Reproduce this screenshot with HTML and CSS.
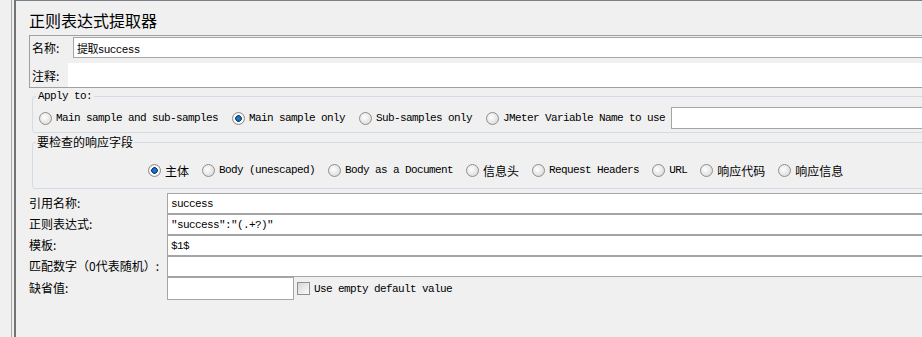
FILE: index.html
```html
<!DOCTYPE html>
<html lang="zh">
<head>
    <meta charset="UTF-8">
    <meta name="viewport" content="width=device-width, initial-scale=1.0">
    <title>正则表达式提取器</title>
    <link rel="stylesheet" href="styles.css">
</head>
<body>
<div class="tree-edge"></div>
<div class="splitter"></div>
<main class="panel">
    <h1 class="panel-title">正则表达式提取器</h1>

    <div class="name-box">
        <div class="name-row">
            <label class="name-label">名称:</label>
            <input class="text-field name-field mono" type="text" value="提取success">
        </div>
        <div class="comment-row">
            <label class="comment-label">注释:</label>
            <input class="comment-field" type="text">
        </div>
    </div>

    <fieldset class="group">
        <legend class="group-title mono">Apply to:</legend>
        <div class="option-row apply-row">
            <label class="option"><input class="radio" type="radio" name="scope"><span class="mono">Main sample and sub-samples</span></label>
            <label class="option"><input class="radio" type="radio" name="scope" checked><span class="mono">Main sample only</span></label>
            <label class="option"><input class="radio" type="radio" name="scope"><span class="mono">Sub-samples only</span></label>
            <label class="option"><input class="radio" type="radio" name="scope"><span class="mono">JMeter Variable Name to use</span></label>
            <input class="text-field var-field" type="text">
        </div>
    </fieldset>

    <fieldset class="group field-group">
        <legend class="group-title">要检查的响应字段</legend>
        <div class="option-row field-row">
            <label class="option"><input class="radio" type="radio" name="field" checked><span>主体</span></label>
            <label class="option"><input class="radio" type="radio" name="field"><span class="mono">Body (unescaped)</span></label>
            <label class="option"><input class="radio" type="radio" name="field"><span class="mono">Body as a Document</span></label>
            <label class="option"><input class="radio" type="radio" name="field"><span>信息头</span></label>
            <label class="option"><input class="radio" type="radio" name="field"><span class="mono">Request Headers</span></label>
            <label class="option"><input class="radio" type="radio" name="field"><span class="mono">URL</span></label>
            <label class="option"><input class="radio" type="radio" name="field"><span>响应代码</span></label>
            <label class="option"><input class="radio" type="radio" name="field"><span>响应信息</span></label>
        </div>
    </fieldset>

    <div class="form-grid">
        <label class="form-label">引用名称:</label>
        <input class="text-field stacked mono" type="text" value="success">
        <label class="form-label">正则表达式:</label>
        <input class="text-field stacked mono" type="text" value='"success":"(.+?)"'>
        <label class="form-label">模板:</label>
        <input class="text-field stacked mono" type="text" value="$1$">
        <label class="form-label">匹配数字（0代表随机）:</label>
        <input class="text-field stacked mono" type="text">
        <label class="form-label">缺省值:</label>
        <div class="default-row">
            <input class="text-field default-field mono" type="text">
            <label class="option check-option"><input class="checkbox" type="checkbox"><span class="mono">Use empty default value</span></label>
        </div>
    </div>
</main>
</body>
</html>
```

FILE: styles.css
```css
* {
    box-sizing: border-box;
}

body {
    margin: 0;
    height: 100vh;
    display: flex;
    overflow: hidden;
    background-color: #f0f0f0;
    color: #000000;
    font-family: "Noto Sans CJK SC", sans-serif;
    font-size: 12px;
}

.mono {
    font-family: "Liberation Mono", "Noto Sans CJK SC", monospace;
    font-size: 11px;
    letter-spacing: -0.6px;
}

.tree-edge {
    width: 11px;
    flex: none;
}

.splitter {
    width: 5px;
    flex: none;
    border-left: 1px solid #a8a8a8;
    border-right: 2px solid #737373;
}

.panel {
    flex: 1;
    min-width: 0;
    overflow: hidden;
    border-top: 1px solid #7b8088;
    padding-left: 13px;
}

.panel-title {
    margin: 9px 0 5px;
    font-size: 16px;
    line-height: 20px;
    font-weight: normal;
}

.text-field {
    margin: 0;
    padding: 0 3px;
    border: 1px solid #a5a5a5;
    background-color: #ffffff;
    color: #000000;
    outline: none;
}

.name-box {
    border: 1px solid #a0a0a0;
    margin-right: -4px;
    padding: 1px 0 0 1px;
}

.name-row,
.comment-row {
    display: flex;
    align-items: center;
}

.name-label {
    width: 42px;
    padding-left: 1px;
}

.name-field {
    flex: 1;
    min-width: 0;
    height: 21px;
}

.comment-row {
    margin-top: 5px;
}

.comment-label {
    width: 37px;
    padding-left: 1px;
}

.comment-field {
    flex: 1;
    min-width: 0;
    height: 24px;
    margin: 0;
    border: none;
    background-color: #ffffff;
    outline: none;
}

.group {
    margin: 2px -4px 0 3px;
    min-width: 0;
    border: 1px solid #d3dce6;
    border-radius: 3px;
    padding: 5px 0 3px 3px;
}

.group-title {
    padding: 0 2px;
    line-height: 12px;
}

.field-group .group-title {
    padding: 0 1px;
    line-height: 14px;
}

.field-group {
    padding: 11px 0 8px 3px;
}

.option-row {
    display: flex;
    align-items: center;
    gap: 14px;
}

.apply-row {
    height: 22px;
    margin-left: 3px;
}

.field-row {
    height: 20px;
    padding-left: 112px;
    gap: 13px;
}

.option {
    display: flex;
    align-items: center;
    white-space: nowrap;
}

.radio {
    appearance: none;
    flex: none;
    width: 13px;
    height: 13px;
    margin: 0 4px 0 0;
    border: 1px solid #8e8e8e;
    border-radius: 50%;
    background: radial-gradient(circle at 40% 40%, #ffffff, #d2d2d2);
}

.radio:checked {
    background: radial-gradient(circle, #2a86d6 0, #1561a8 2.2px, #0b3563 3px, #ffffff 3.6px, #f4f4f4 5px, #d2d2d2 6px);
}

.var-field {
    flex: 1;
    min-width: 0;
    height: 22px;
    margin-left: -8px;
}

.form-grid {
    display: grid;
    grid-template-columns: 138px 1fr;
    grid-template-rows: 21px 21px 21px 21px 23px;
    align-items: center;
    margin: 4px -4px 0 0;
}

.form-label {
    white-space: nowrap;
    margin-top: -2px;
}

.stacked {
    width: 100%;
    height: 21px;
}

.default-row {
    display: flex;
    align-items: center;
    height: 23px;
}

.default-field {
    width: 127px;
    height: 23px;
}

.checkbox {
    appearance: none;
    flex: none;
    width: 13px;
    height: 13px;
    margin: 0 4px 0 3px;
    border: 1px solid #8f8f8f;
    background: linear-gradient(135deg, #d6d6d6, #fbfbfb);
}
```
